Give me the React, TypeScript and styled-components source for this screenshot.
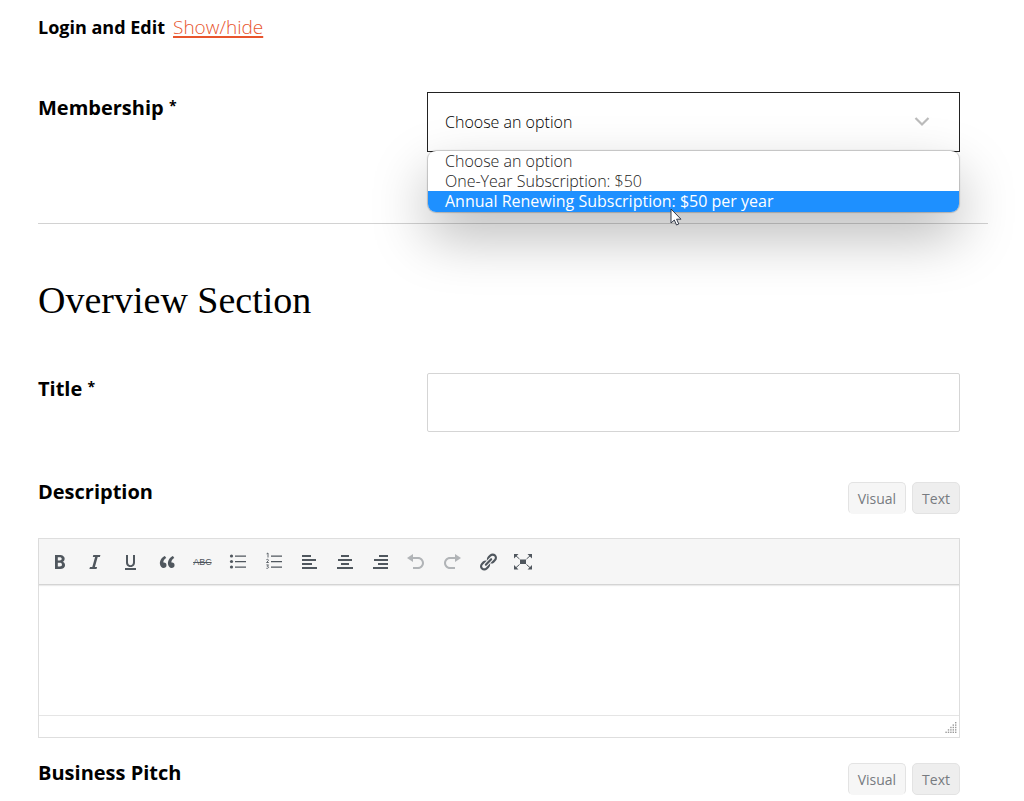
import React from "react";
import styled, { createGlobalStyle, css } from "styled-components";

const GlobalStyle = createGlobalStyle`
  *, *::before, *::after { box-sizing: border-box; }
  body {
    margin: 0;
    background: #fff;
    color: #000;
    font-family: "Open Sans", "Noto Sans", sans-serif;
    font-size: 16px;
  }
`;

const Page = styled.main`
  padding: 16px 36px 0 38px;
`;

const FormBlock = styled.div`
  padding-right: 28px;
`;

const LoginLine = styled.p`
  display: flex;
  align-items: baseline;
  gap: 8px;
  height: 24px;
  margin: 0 0 52px;
  font-size: 18px;
  line-height: 22px;
`;

const ToggleLink = styled.a`
  color: #e8552d;
  font-weight: 300;
  font-size: 19px;
  text-decoration-thickness: 2px;
  text-underline-offset: 2px;
`;

const FieldRow = styled.div`
  display: grid;
  grid-template-columns: 389fr 533fr;
  align-items: start;
`;

const labelText = css`
  font-size: 20px;
  line-height: 20px;
  font-weight: 700;
`;

const FieldLabel = styled.label`
  ${labelText}
  padding-top: 6px;
`;

const EditorLabel = styled.label`
  ${labelText}
`;

const Required = styled.span`
  font-size: 14px;
  line-height: 1;
  font-weight: 700;
  vertical-align: 4px;
`;

const SelectWrap = styled.div`
  position: relative;
`;

const Select = styled.select`
  display: block;
  width: 100%;
  height: 60px;
  padding: 0 48px 0 17px;
  appearance: none;
  border: 1px solid #222;
  border-radius: 0;
  outline: none;
  background: #fff;
  color: #000;
  font: 300 16px "Open Sans", "Noto Sans", sans-serif;
`;

const Chevron = styled.svg`
  position: absolute;
  top: 24px;
  right: 30px;
  width: 16px;
  height: 12px;
  pointer-events: none;
`;

const OptionList = styled.ul`
  position: absolute;
  z-index: 2;
  top: 59px;
  left: 1px;
  right: 1px;
  margin: 0;
  padding: 0;
  list-style: none;
  border-radius: 8px;
  background: #fff;
  box-shadow: 0 0 1px 1px rgba(0, 0, 0, 0.2), 0 24px 56px rgba(0, 0, 0, 0.28);
`;

const Option = styled.li<{ $active?: boolean }>`
  padding: 0 17px;
  font-size: 16px;
  line-height: 20px;
  font-weight: ${(p) => (p.$active ? 400 : 300)};
  color: ${(p) => (p.$active ? "#fff" : "#222")};
  background: ${(p) => (p.$active ? "#1e90ff" : "transparent")};

  &:last-child {
    padding-bottom: 1px;
    border-radius: 0 0 8px 8px;
  }
`;

const Pointer = styled.svg`
  position: absolute;
  z-index: 3;
  top: 116px;
  left: 243px;
  width: 12px;
  height: 18px;
`;

const Divider = styled.hr`
  margin: 71px 0 0;
  border: 0;
  border-top: 1px solid #d2d2d2;
`;

const SectionTitle = styled.h2`
  margin: 52px 0 48px;
  font-family: "Liberation Serif", serif;
  font-size: 38px;
  line-height: 49px;
  font-weight: 400;
`;

const TextInput = styled.input`
  width: 100%;
  height: 59px;
  padding: 0 17px;
  border: 1px solid #d5d5d5;
  border-radius: 2px;
  font: 400 16px "Open Sans", "Noto Sans", sans-serif;
`;

const EditorHeader = styled.div`
  display: flex;
  justify-content: space-between;
  align-items: flex-start;
`;

const EditorSection = styled.section`
  margin-top: 50px;

  & + & { margin-top: 25px; }
`;

const ModeTabs = styled.div`
  display: flex;
  gap: 6px;
`;

const ModeTab = styled.button<{ $current?: boolean }>`
  height: 32px;
  padding: 0 9px;
  border: 1px solid #e3e3e3;
  border-bottom-color: ${(p) => (p.$current ? "#f6f6f6" : "#e3e3e3")};
  border-radius: 5px;
  background: ${(p) => (p.$current ? "#f6f6f6" : "#eee")};
  color: #777b80;
  font: 400 14px "Open Sans", "Noto Sans", sans-serif;
`;

const EditorFrame = styled.div`
  margin-top: 24px;
  border: 1px solid #dedede;
`;

const Toolbar = styled.div`
  height: 46px;
  padding-left: 3px;
  border-bottom: 1px solid #d4d4d4;
  background: #f6f6f6;
  box-shadow: 0 1px 1px rgba(0, 0, 0, 0.08);
`;

const ToolGroup = styled.div`
  display: grid;
  grid-template-columns: repeat(14, 1fr);
  max-width: 499px;
  height: 100%;
`;

const Tool = styled.button`
  display: flex;
  align-items: center;
  justify-content: center;
  padding: 0;
  border: 0;
  background: transparent;
  color: #50575e;

  &:disabled { color: #b1b4b7; }
`;

const ToolIcon = styled.svg`
  width: 20px;
  height: 20px;
  fill: currentColor;
`;

const StrikeLabel = styled.span`
  font-size: 9px;
  line-height: 12px;
  text-decoration: line-through;
`;

const TextArea = styled.textarea`
  display: block;
  width: 100%;
  height: 130px;
  padding: 10px;
  border: 0;
  outline: 0;
  resize: none;
  background: transparent;
`;

const StatusBar = styled.div`
  display: flex;
  align-items: flex-end;
  justify-content: flex-end;
  height: 22px;
  padding: 0 2px 3px;
  border-top: 1px solid #e5e5e5;
`;

const Grip = styled.svg`
  width: 12px;
  height: 12px;
  fill: #999;
`;

const icons: Record<string, React.ReactNode> = {
  bold: (
    <path d="M5 3v14h5.1c1.5 0 2.7-.35 3.6-1.05.9-.7 1.3-1.7 1.3-2.95 0-.9-.2-1.6-.6-2.1s-1-.9-1.8-1.1v-.1c.6-.1 1.1-.4 1.5-.95.35-.5.55-1.15.55-1.950 0-1.200-.45-2.100-1.300-2.650C12.500 3.270 11.150 3 9.300 3H5zm2.800 5.500V5.300h1.600c.8 0 1.400.12 1.750.35.37.23.55.63.55 1.150 0 .6-.17 1-.5 1.250-.34.25-.9.450-1.650.450H7.800zm0 2.200h1.800c1.550 0 2.350.6 2.350 1.800 0 .7-.2 1.200-.55 1.500-.37.32-.95.500-1.700.500H7.800v-3.800z" />
  ),
  italic: <path d="M15.4 3H8.3l-.5 2h2.3l-2.8 10H5l-.6 2h7.1l.6-2H9.900l2.800-10h2.200z" />,
  underline: (
    <path d="M14 3h-2v7.2c0 1.99-1.12 2.98-2.45 2.98C8.2 13.18 7 12.2 7 10.2V3H5v7.4c0 1.91 1 4.54 4.48 4.54 3.49 0 4.52-2.58 4.52-4.5V3zm1 15v-2H4v2h11z" />
  ),
  quote: (
    <path d="M9.49 13.22c0-.74-.2-1.38-.61-1.9-.62-.78-1.83-.88-2.53-.72-.29-1.65 1.11-3.75 2.92-4.65L7.88 4c-2.73 1.3-5.42 4.28-4.96 8.05C3.21 14.43 4.59 16 6.54 16c.85 0 1.56-.25 2.12-.75s.83-1.18.83-2.03zm8.05 0c0-.74-.2-1.38-.61-1.9-.63-.78-1.83-.88-2.53-.72-.29-1.65 1.11-3.75 2.92-4.65L15.93 4c-2.73 1.3-5.41 4.28-4.95 8.05.29 2.38 1.66 3.95 3.61 3.95.85 0 1.56-.25 2.12-.75s.83-1.18.83-2.03z" />
  ),
  bullets: (
    <>
      <circle cx="3.5" cy="4" r="1.6" />
      <circle cx="3.5" cy="9.500" r="1.6" />
      <circle cx="3.5" cy="15" r="1.6" />
      <path d="M7 3.500h11v1.2H7zM7 9h11v1.2H7zM7 14.500h11v1.2H7z" />
    </>
  ),
  numbers: (
    <>
      <path
        d="M2.6 1.800 4 1v4.500M2.4 7.700c1.6-1 2.6.2 1.7 1.2L2.500 10.500h2.3M2.4 12.900h2.1l-1.2 1.4c1.8-.1 1.8 2.4-.9 2"
        fill="none"
        stroke="currentColor"
        strokeWidth="0.9"
      />
      <path d="M7 3.500h11v1.2H7zM7 9h11v1.2H7zM7 14.500h11v1.2H7z" />
    </>
  ),
  left: <path d="M12 4V2H3v2h9zm5 4V6H3v2h14zm-4 4v-2H3v2h10zm5 4v-2H3v2h15z" transform="translate(0 1)" />,
  center: <path d="M14 5V3H6v2h8zm3 4V7H3v2h14zm-3 4v-2H6v2h8zm4 4v-2H2v2h16z" />,
  right: <path d="M17 5V3H8v2h9zm0 4V7H3v2h14zm0 4v-2H7v2h10zm0 4v-2H2v2h15z" />,
  undo: <path d="M12 5H7V2L1 6l6 4V7h5c2.2 0 4 1.8 4 4s-1.8 4-4 4H7v2h5c3.3 0 6-2.7 6-6s-2.7-6-6-6z" />,
  redo: <path d="M8 5h5V2l6 4-6 4V7H8c-2.2 0-4 1.8-4 4s1.8 4 4 4h5v2H8c-3.3 0-6-2.7-6-6s2.7-6 6-6z" />,
  link: (
    <path d="M17.74 2.76c1.68 1.69 1.68 4.41 0 6.1l-1.53 1.52c-1.12 1.12-2.7 1.47-4.14 1.09l2.62-2.61.76-.77.76-.76c.84-.84.84-2.2 0-3.04-.84-.85-2.2-.85-3.04 0l-.77.76-3.38 3.38c-.37-1.44-.02-3.02 1.1-4.14l1.52-1.53c1.69-1.68 4.42-1.68 6.1 0zM8.59 13.43l5.34-5.34c.42-.42.42-1.1 0-1.52-.44-.43-1.13-.39-1.53 0l-5.33 5.34c-.42.42-.42 1.1 0 1.52.44.43 1.13.39 1.52 0zm-.76 2.29l4.14-4.15c.38 1.44.03 3.02-1.09 4.14l-1.52 1.53c-1.69 1.68-4.41 1.68-6.1 0-1.68-1.68-1.68-4.42 0-6.1l1.53-1.52c1.12-1.12 2.7-1.47 4.14-1.1l-4.14 4.15c-.85.84-.85 2.2 0 3.05.84.84 2.2.84 3.04 0z" />
  ),
  fullscreen: (
    <>
      <path d="M7 7.500h6v4.500H7z" />
      <path d="M1 2h4.500L1 6.500zM19 2v4.500L14.500 2zM1 17.500V13l4.500 4.500zM19 17.500h-4.500L19 13z" />
      <path
        d="M2 3 6.500 7M18 3 13.500 7M2 16.500 6.500 12.500M18 16.500 13.500 12.500"
        fill="none"
        stroke="currentColor"
        strokeWidth="1"
      />
    </>
  ),
};

const tools = [
  { id: "bold", label: "Bold" },
  { id: "italic", label: "Italic" },
  { id: "underline", label: "Underline" },
  { id: "quote", label: "Blockquote" },
  { id: "strike", label: "Strikethrough" },
  { id: "bullets", label: "Bulleted list" },
  { id: "numbers", label: "Numbered list" },
  { id: "left", label: "Align left" },
  { id: "center", label: "Align center" },
  { id: "right", label: "Align right" },
  { id: "undo", label: "Undo", disabled: true },
  { id: "redo", label: "Redo", disabled: true },
  { id: "link", label: "Insert link" },
  { id: "fullscreen", label: "Fullscreen" },
];

const options = [
  "Choose an option",
  "One-Year Subscription: $50",
  "Annual Renewing Subscription: $50 per year",
];

const gripDots = [0, 1, 2, 3, 4].flatMap((row) =>
  Array.from({ length: row + 1 }, (_, i) => ({ x: 10 - i * 2.4, y: row * 2.4 }))
);

function EditorHead({ id, title }: { id: string; title: string }) {
  return (
    <EditorHeader>
      <EditorLabel htmlFor={id}>{title}</EditorLabel>
      <ModeTabs>
        <ModeTab type="button" $current>
          Visual
        </ModeTab>
        <ModeTab type="button">Text</ModeTab>
      </ModeTabs>
    </EditorHeader>
  );
}

function RichEditor({ id }: { id: string }) {
  return (
    <EditorFrame>
      <Toolbar role="toolbar">
        <ToolGroup>
          {tools.map((tool) => (
            <Tool key={tool.id} type="button" aria-label={tool.label} disabled={tool.disabled}>
              {tool.id === "strike" ? (
                <StrikeLabel>ABC</StrikeLabel>
              ) : (
                <ToolIcon viewBox="0 0 20 20">{icons[tool.id]}</ToolIcon>
              )}
            </Tool>
          ))}
        </ToolGroup>
      </Toolbar>
      <TextArea id={id} />
      <StatusBar>
        <Grip viewBox="0 0 12 12">
          {gripDots.map((d) => (
            <rect key={`${d.x}-${d.y}`} x={d.x} y={d.y} width="1.4" height="1.4" />
          ))}
        </Grip>
      </StatusBar>
    </EditorFrame>
  );
}

export default function App() {
  return (
    <>
      <GlobalStyle />
      <Page>
        <FormBlock>
          <LoginLine>
            <strong>Login and Edit</strong> <ToggleLink href="#login">Show/hide</ToggleLink>
          </LoginLine>
          <FieldRow>
            <FieldLabel htmlFor="membership">
              Membership <Required>*</Required>
            </FieldLabel>
            <SelectWrap>
              <Select id="membership" defaultValue={options[0]}>
                {options.map((o) => (
                  <option key={o}>{o}</option>
                ))}
              </Select>
              <Chevron viewBox="0 0 16 12">
                <path d="M1.5 2 8 8.5 14.5 2" fill="none" stroke="#bbb" strokeWidth="2.2" />
              </Chevron>
              <OptionList role="listbox" aria-label="Membership">
                {options.map((o, i) => (
                  <Option key={o} role="option" aria-selected={i === 2} $active={i === 2}>
                    {o}
                  </Option>
                ))}
              </OptionList>
              <Pointer viewBox="0 0 12 18">
                <path
                  d="M1 1v14l3.3-3 2.2 5 2.3-1-2.2-4.8H11z"
                  fill="#fff"
                  stroke="#333a4a"
                  strokeWidth="1"
                />
              </Pointer>
            </SelectWrap>
          </FieldRow>
        </FormBlock>
        <Divider />
        <FormBlock>
          <SectionTitle>Overview Section</SectionTitle>
          <FieldRow>
            <FieldLabel htmlFor="title">
              Title <Required>*</Required>
            </FieldLabel>
            <TextInput id="title" type="text" />
          </FieldRow>
          <EditorSection>
            <EditorHead id="description" title="Description" />
            <RichEditor id="description" />
          </EditorSection>
          <EditorSection>
            <EditorHead id="pitch" title="Business Pitch" />
          </EditorSection>
        </FormBlock>
      </Page>
    </>
  );
}
